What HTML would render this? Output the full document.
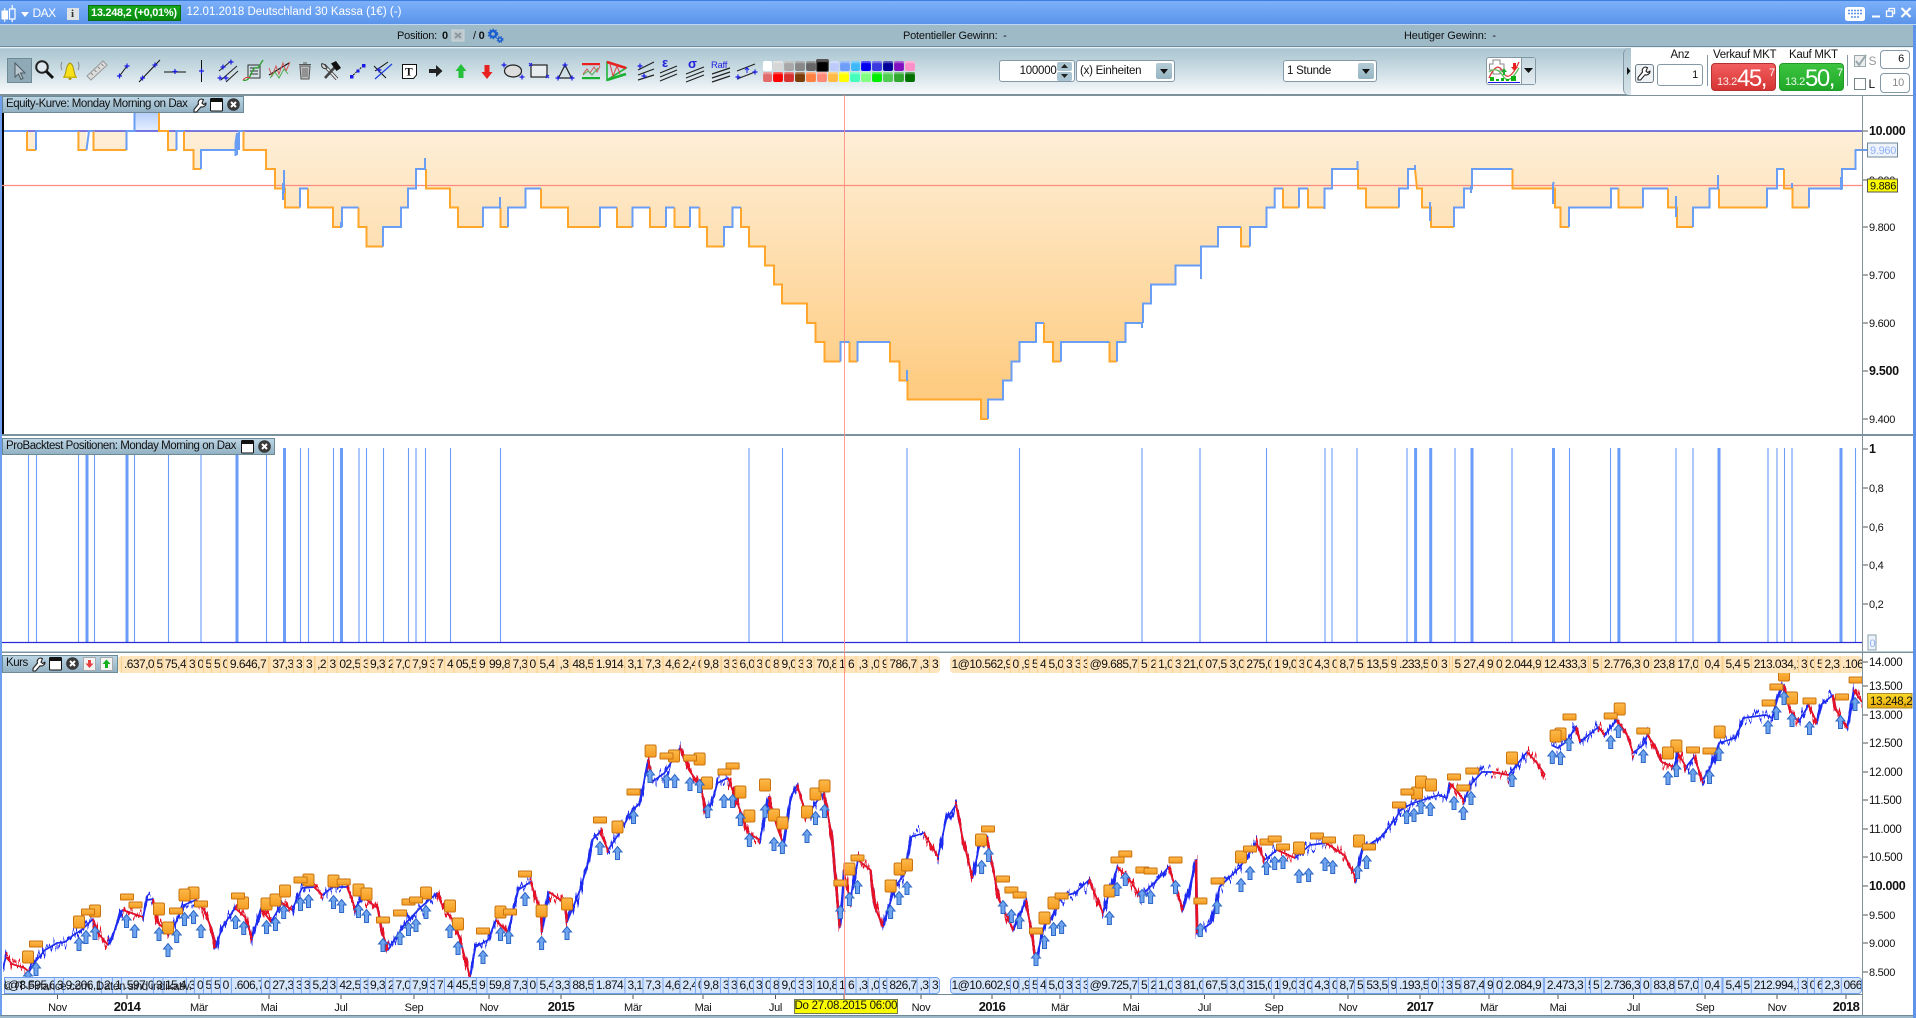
<!DOCTYPE html>
<html lang="de"><head><meta charset="utf-8"><title>DAX</title>
<style>
html,body{margin:0;padding:0;background:#fff}
#p{position:relative;width:1916px;height:1018px;overflow:hidden;background:#fff;font:11px "Liberation Sans",Arial,sans-serif;color:#111;letter-spacing:-.25px}
.a{position:absolute;white-space:nowrap}
svg{position:absolute;left:0;top:0}
svg text{font-family:"Liberation Sans",Arial,sans-serif;font-size:11px;letter-spacing:-.3px;fill:#111}
.inp{background:#fff;border:1px solid #8499a5;border-radius:3px;box-sizing:border-box}
.st{position:absolute;overflow:hidden;border-radius:4px}
.st i{position:absolute;top:0;bottom:0;transform:translateX(-50%);font-style:normal;padding:0 2px;line-height:17px;white-space:nowrap;letter-spacing:-.55px;font-size:12px;color:#111}
.o{background:#fee5bd}.o i{background:#fee5bd;border-left:1px solid #fbd08c;border-right:1px solid #fbd08c}
.b{background:#d5e6fb;border:1px solid #6f9ff0;box-sizing:border-box}.b i{background:#d5e6fb;border-left:1px solid #7ba6ee;border-right:1px solid #7ba6ee}
.hd{position:absolute;background:linear-gradient(#bcd5e5,#92b1c2);border:1px solid #6d8a97;box-sizing:border-box;line-height:15px;padding-left:3px;letter-spacing:-.46px;font-size:11.5px}
.sw{position:absolute;width:9.6px;height:10px;border-radius:2px;box-shadow:inset 0 2px 1px rgba(255,255,255,.35)}
.sel{position:absolute;background:#fff;border:1px solid #8499a5;border-radius:3px;box-sizing:border-box;height:22px;top:60px;line-height:20px;padding-left:3px;font-size:11.5px}
.sel b{position:absolute;right:2px;top:2px;width:16px;height:16px;background:linear-gradient(#b5ccd7,#96b5c3);border-radius:2px}
.sel b:after{content:"";position:absolute;left:4px;top:6px;border:4px solid transparent;border-top:5px solid #111;border-bottom:0}
</style></head><body><div id="p">

<div class="a" style="left:0;top:0;width:1916px;height:25px;background:linear-gradient(#7cb0fa,#5a94ea);border-top:1px solid #3d7ddc;box-sizing:border-box;border-bottom:1px solid #bcd6f8"></div>
<div class="a" style="left:0;top:25px;width:1913px;height:22px;background:#9dbac6;border-bottom:1px solid #6f8f9c;box-sizing:border-box"></div>
<div class="a" style="left:0;top:47px;width:1913px;height:48px;background:linear-gradient(#fff 0,#aac5d1 2px,#d0e0e6 55%,#f8fafb);border-bottom:1px solid #7f929c;box-sizing:border-box"></div>
<div class="a" style="left:1913px;top:25px;width:3px;height:993px;background:#5d93ea"></div>
<div class="a" style="left:0;top:95px;width:2px;height:923px;background:#6e9fee"></div>
<div class="a" style="left:0;top:1015px;width:1913px;height:3px;background:#9db8c8;border-top:1px solid #6f8a96;box-sizing:border-box"></div>

<div class="a" style="left:32.5px;top:6px;color:#fff;font-size:12px;letter-spacing:-.5px">DAX</div>
<div class="a" style="left:66.5px;top:8px;width:12px;height:12px;background:#dfe3e6;color:#333;font:bold 11px/12px 'Liberation Serif',serif;text-align:center;letter-spacing:0">i</div>
<div class="a" style="left:88px;top:5px;width:93px;height:16px;background:linear-gradient(#14a81c,#078a10);border:1px solid #0d6b12;box-sizing:border-box;color:#fff;font-weight:bold;line-height:14px;padding-left:2px;letter-spacing:-.3px">13.248,2 (+0,01%)</div>
<div class="a" style="left:186.5px;top:6px;color:#fff;font-size:11.5px;letter-spacing:.02px">12.01.2018 Deutschland 30 Kassa (1€) (-)</div>

<div class="a" style="left:397px;top:30px">Position:</div>
<div class="a" style="left:442px;top:30px;font-weight:bold">0</div>
<div class="a" style="left:473px;top:30px">/ <b>0</b></div>
<div class="a" style="left:903px;top:30px;letter-spacing:-.2px">Potentieller Gewinn:&nbsp; -</div>
<div class="a" style="left:1404px;top:30px;letter-spacing:-.15px">Heutiger Gewinn:&nbsp; -</div>

<div class="a" style="left:6.5px;top:58px;width:25px;height:25px;background:#8fa9b6;border:1px solid #6d8a97;box-sizing:border-box"></div>

<div class="sw" style="left:762.5px;top:61px;background:#fff"></div><div class="sw" style="left:773.4px;top:61px;background:#d6d6d6"></div><div class="sw" style="left:784.2px;top:61px;background:#a8a8a8"></div><div class="sw" style="left:795px;top:61px;background:#888"></div><div class="sw" style="left:806px;top:61px;background:#666"></div><div class="sw" style="left:815.5px;top:59px;width:13px;height:13px;background:#000;border:1px solid #555;box-sizing:border-box"></div><div class="sw" style="left:829.5px;top:61px;background:#bccbfb"></div><div class="sw" style="left:840px;top:61px;background:#6e9ef7"></div><div class="sw" style="left:850.5px;top:61px;background:#3fb8fa"></div><div class="sw" style="left:861px;top:61px;background:#0000f0"></div><div class="sw" style="left:872px;top:61px;background:#3a3ae0"></div><div class="sw" style="left:883px;top:61px;background:#00009a"></div><div class="sw" style="left:894px;top:61px;background:#8010c0"></div><div class="sw" style="left:905px;top:61px;background:#ff8fc8"></div>
<div class="sw" style="left:762.5px;top:72px;background:#e26c6c"></div><div class="sw" style="left:773.4px;top:72px;background:#f00"></div><div class="sw" style="left:784.2px;top:72px;background:#d93030"></div><div class="sw" style="left:795px;top:72px;background:#7a3c08"></div><div class="sw" style="left:806px;top:72px;background:#ff8040"></div><div class="sw" style="left:817px;top:72px;background:#ff8a78"></div><div class="sw" style="left:828px;top:72px;background:#ffbb44"></div><div class="sw" style="left:839px;top:72px;background:#ff0"></div><div class="sw" style="left:850px;top:72px;background:#44ffbb"></div><div class="sw" style="left:861px;top:72px;background:#80ff80"></div><div class="sw" style="left:872px;top:72px;background:#00ee00"></div><div class="sw" style="left:883px;top:72px;background:#50cc50"></div><div class="sw" style="left:894px;top:72px;background:#30a830"></div><div class="sw" style="left:905px;top:72px;background:#007000"></div>

<div class="inp a" style="left:998.5px;top:60px;width:76px;height:22px;line-height:20px;font-size:11.5px;text-align:right;padding-right:17px">100000</div>
<div class="a" style="left:1057px;top:62px;width:15px;height:9px;background:#a9c4d0;border-radius:2px"></div>
<div class="a" style="left:1057px;top:72px;width:15px;height:9px;background:#a9c4d0;border-radius:2px"></div>
<div class="sel" style="left:1076px;width:99px">(x) Einheiten<b></b></div>
<div class="sel" style="left:1283px;width:94px">1 Stunde<b></b></div>

<div class="a" style="left:1486px;top:57px;width:50px;height:28px;background:#fff;border:1px solid #8499a5;border-radius:3px;box-sizing:border-box"></div>
<div class="a" style="left:1521px;top:58px;width:14px;height:26px;background:linear-gradient(#c2d5de,#e4ecf0);border-left:1px solid #8499a5;box-sizing:border-box"></div>

<div class="a" style="left:1623px;top:48px;width:9px;height:47px;background:linear-gradient(#a8c3cf,#d9e5ea);border-radius:6px 0 0 6px;border-left:1px solid #8499a5;box-sizing:border-box"></div>
<div class="a" style="left:1631px;top:48px;width:282px;height:47px;background:#fff"></div>
<div class="a" style="left:1635px;top:64px;width:19px;height:19px;background:#f0f3f5;border:1px solid #6d7e88;border-radius:3px;box-sizing:border-box"></div>
<div class="a" style="left:1657px;top:49px;width:46px;text-align:center;font-size:11.5px">Anz</div>
<div class="inp a" style="left:1657px;top:64px;width:46px;height:22px;line-height:20px;text-align:right;padding-right:4px">1</div>
<div class="a" style="left:1707px;top:55px;width:1px;height:31px;background:#8499a5"></div>
<div class="a" style="left:1713px;top:49px;font-size:11.5px;letter-spacing:-.3px">Verkauf MKT</div>
<div class="a" style="left:1711px;top:63px;width:65px;height:28px;background:linear-gradient(#f25e5e,#d63434);border:1px solid #b53232;border-radius:4px;box-sizing:border-box;color:#fff">
 <span class="a" style="left:5px;top:12px;font-size:11px;opacity:.9;letter-spacing:-.4px">13.2</span><span class="a" style="left:25px;top:1px;font-size:24px;letter-spacing:-1.5px">45,</span><span class="a" style="left:57px;top:3px;font-size:11px">7</span></div>
<div class="a" style="left:1789px;top:49px;font-size:11.5px;letter-spacing:-.3px">Kauf MKT</div>
<div class="a" style="left:1779px;top:63px;width:65px;height:28px;background:linear-gradient(#3cc440,#20a728);border:1px solid #209a28;border-radius:4px;box-sizing:border-box;color:#fff">
 <span class="a" style="left:5px;top:12px;font-size:11px;opacity:.9;letter-spacing:-.4px">13.2</span><span class="a" style="left:25px;top:1px;font-size:24px;letter-spacing:-1.5px">50,</span><span class="a" style="left:57px;top:3px;font-size:11px">7</span></div>
<div class="a" style="left:1847px;top:55px;width:1px;height:31px;background:#8499a5"></div>
<div class="a" style="left:1853.5px;top:55px;width:12px;height:12px;background:#eee;border:1px solid #9aa8b0;box-sizing:border-box"></div>
<div class="a" style="left:1868.5px;top:54px;color:#999;font-size:12px">S</div>
<div class="inp a" style="left:1880px;top:50px;width:30px;height:19px;line-height:17px;text-align:right;padding-right:5px;border-radius:4px">6</div>
<div class="a" style="left:1853.5px;top:78px;width:12px;height:12px;background:#fff;border:1px solid #77858d;box-sizing:border-box"></div>
<div class="a" style="left:1868.5px;top:77px;font-size:12px">L</div>
<div class="inp a" style="left:1880px;top:73px;width:30px;height:20px;line-height:18px;text-align:right;padding-right:5px;border-radius:4px;color:#8a8a8a">10</div>

<svg width="1916" height="1018" viewBox="0 0 1916 1018">
<defs>
<linearGradient id="fo" gradientUnits="userSpaceOnUse" x1="0" y1="131" x2="0" y2="419"><stop offset="0" stop-color="#feefd8"/><stop offset="1" stop-color="#fec878"/></linearGradient>
<linearGradient id="fb" x1="0" y1="0" x2="0" y2="1"><stop offset="0" stop-color="#b5cefb"/><stop offset="1" stop-color="#e6effe"/></linearGradient>
<linearGradient id="og" x1="0" y1="0" x2="0" y2="1"><stop offset="0" stop-color="#fdb94a"/><stop offset="1" stop-color="#f59c20"/></linearGradient>
<linearGradient id="gt" x1="0" y1="0" x2="0" y2="1"><stop offset="0" stop-color="#fbd92c"/><stop offset="1" stop-color="#e6aa06"/></linearGradient>
<clipPath id="cp"><rect x="3" y="673" width="1859" height="304"/></clipPath>
<filter id="j" filterUnits="userSpaceOnUse" x="0" y="660" width="1870" height="330" color-interpolation-filters="sRGB"><feTurbulence type="fractalNoise" baseFrequency=".4 .015" numOctaves="2" seed="4"/><feColorMatrix values="1 0 0 0 0 0 1 0 0 0 0 0 0 0 .5 0 0 0 0 1" result="n"/><feDisplacementMap in="SourceGraphic" in2="n" scale="26" xChannelSelector="B" yChannelSelector="G"/></filter>
<g id="s"><rect x="-5.5" y="-6" width="11" height="12" rx="1.5" fill="url(#og)" stroke="#c8730f"/></g>
<g id="w"><rect x="-6.5" y="-3" width="13" height="6" rx=".5" fill="url(#og)" stroke="#c8730f"/></g>
<g id="u"><path d="M0-6.5 4.5-1H2V6.5H-2V-1H-4.5Z" fill="#6ea3ee" stroke="#2f68c6"/></g>
<g id="pr">
<path stroke="#1d2cf0" d="M3 967 6 957 12 964 24.5 968 29 972 35 962 45 950 57 943 65 942 73.5 935 81.6 930 93 919 98 933 108 945 114 932 122.5 910 143 917 147 900 153 899 158 923 169 933 175.5 923 184 905 196 900 204 910 212 930 215 948 222.5 927 235 908 245 917 252 938 261 908 271 922 282 903 292 910 302 888 314 887 322.5 895 332.6 887 347 887 355 908 363 897 377.5 908 381.6 930 388 950 404 925 420 908 437 893 443 907 453 920 461 943 470 977 475.5 947 488 940 496 920 508 933 518 890 530.6 882 541 913 542 932 549 892 565 903 567 922 580 890 588 863 592 840 600 832 608 850 618 835 632.6 810 640 803 648 760 652 782 664.5 773 680 748 689 770 701 787 707 817 717.5 783 728 778 740 810 748 833 760 840 768.6 797 777 827 783 843 791 797 797 785 807 817 815.5 803 824 793 832 837 840 927 844 873 850 900 858 860 870.6 870 875 907 883 927 895 887 905 873 911 837 924 833 938 857 946 820 956 805 962.4 837 972.6 878 979 847 987 837 999 900 1013.5 930 1026 900 1036 960 1044 927 1052 917 1060 897 1075 893 1089 880 1103 913 1117.5 867 1132 883 1140 897 1160 877 1168.6 867 1183 910 1189 890 1196 860 1197 933 1211 923 1219.6 887 1240 867 1256 843 1264.5 860 1277 850 1295 858 1310 845 1326 843 1344 855 1356 878 1362 849 1381 837 1396 818 1400.5 810 1413 803 1439 795 1447 798 1449.5 783 1455.6 790 1464 800 1472 783 1482 772 1492 772 1508.6 775 1527 752 1537 763 1545 775M1551.5 745 1557.6 748 1566 742 1576 727 1580 742 1598.5 727 1604.6 735 1617 720 1627 735 1633 753 1643 745 1647.4 735 1655.6 747 1661.7 762 1674 767 1678 753 1686 767 1694 757 1702.5 780 1710.7 767 1719 743 1735 738 1739 730 1743.3 718 1766 715 1772 718 1778 697 1784 685 1789.5 710 1798.5 722 1808.6 705 1817 723 1821 705 1833 695 1835 708 1847.4 728 1853.6 690 1862 702"/>
<path stroke="#f0101c" d="M6 957 12 964 24.5 968 29 972M93 919 98 933 108 945M122.5 910 143 917M153 899 158 923 169 933M196 900 204 910 212 930 215 948M235 908 245 917 252 938M261 908 271 922M282 903 292 910M314 887 322.5 895M347 887 355 908M363 897 377.5 908 381.6 930 388 950M437 893 443 907 453 920 461 943 470 977M496 920 508 933M530.6 882 541 913 542 932M549 892 565 903 567 922M600 832 608 850M648 760 652 782M680 748 689 770 701 787 707 817M728 778 740 810 748 833 760 840M768.6 797 777 827 783 843M797 785 807 817M824 793 832 837 840 927M844 873 850 900M858 860 870.6 870 875 907 883 927M924 833 938 857M956 805 962.4 837 972.6 878M987 837 999 900 1013.5 930M1026 900 1036 960M1089 880 1103 913M1117.5 867 1132 883 1140 897M1168.6 867 1183 910M1196 860 1197 933M1256 843 1264.5 860M1277 850 1295 858M1326 843 1344 855 1356 878M1449.5 783 1455.6 790 1464 800M1492 772 1508.6 775M1527 752 1537 763 1545 775M1576 727 1580 742M1598.5 727 1604.6 735M1617 720 1627 735 1633 753M1647.4 735 1655.6 747 1661.7 762 1674 767M1678 753 1686 767M1694 757 1702.5 780M1784 685 1789.5 710 1798.5 722M1808.6 705 1817 723M1833 695 1835 708 1847.4 728M1853.6 690 1862 702"/>
</g>
</defs>

<!-- Equity pane -->
<rect x="2" y="112" width="2" height="322" fill="#000"/>
<path fill="url(#fo)" d="M4 131H27V150H36V131H78.4V150H86.5V131H93.5V150H126.5V131H168V150H176.5V131H184V150H193.5V169H201V150H239V131H243.5V150H266V169H275V188.5H285V207.5H300V188.5H308V207.5H333V227H342V207.5H358.5V227H366.5V246.5H383V227H401V207.5H408V188.5H416V169H426V188.5H450V207.5H458V227H483V207.5H500.5V227H508V207.5H525.5V188.5H541V207.5H568V227H600V207.5H617V227H632.5V207.5H650V227H666V207.5H674.5V227H690V207.5H699.5V227H707V246.5H724V227H732.5V207.5H741V227H749V246.5H765V265.5H774V284.5H782V303.5H807V323H815.5V342H824.5V361.5H840.5V342H849.5V361.5H857.5V342H890V361.5H899.5V380.5H907.5V399.5H981V419H988V399.5H1003V380.5H1011.5V361.5H1019.5V342H1036V323H1044V342H1053V361.5H1061V342H1109.5V361.5H1117V342H1125.5V323H1143V303.5H1151V284.5H1175.5V265.5H1201V246.5H1218V227H1241V246.5H1250V227H1266.5V207.5H1274.7V188.5H1283V207.5H1299V188.5H1308V207.5H1324.5V188.5H1332V169H1358V188.5H1366V207.5H1399V188.5H1408V169H1416V188.5H1422V207.5H1431V227H1454V207.5H1464V188.5H1472V169H1512.5V188.5H1555V207.5H1560.5V227H1569V207.5H1611V188.5H1618.5V207.5H1643V188.5H1668V207.5H1677V227H1693V207.5H1709.5V188.5H1719V207.5H1767V188.5H1777V169H1784V188.5H1792.5V207.5H1809V188.5H1842V169H1855.5V150H1862V131Z"/>
<rect x="134.5" y="112" width="24.5" height="19" fill="url(#fb)"/>
<path fill="none" stroke="#2a2ad8" stroke-width="1.2" d="M4 131H1862"/>
<path fill="none" stroke="#ff8a80" stroke-width="1.2" d="M2 185.5H1862"/>
<path fill="none" stroke="#ffa62b" stroke-width="2" d="M27 131V150H36M78.4 131V150H86.5M93.5 131V150H126.5M159 112V131H168V150H176.5M184 131V150H193.5V169H201M243.5 131V150H266V169H275V188.5H285V207.5H300M308 188.5V207.5H333V227H342M358.5 207.5V227H366.5V246.5H383M426 169V188.5H450V207.5H458V227H483M500.5 207.5V227H508M541 188.5V207.5H568V227H600M617 207.5V227H632.5M650 207.5V227H666M674.5 207.5V227H690M699.5 207.5V227H707V246.5H724M741 207.5V227H749V246.5H765V265.5H774V284.5H782V303.5H807V323H815.5V342H824.5V361.5H840.5M849.5 342V361.5H857.5M890 342V361.5H899.5V380.5H907.5V399.5H981V419H988M1044 323V342H1053V361.5H1061M1109.5 342V361.5H1117M1241 227V246.5H1250M1283 188.5V207.5H1299M1308 188.5V207.5H1324.5M1358 169V188.5H1366V207.5H1399M1415 169L1417 188.5H1422V207.5H1431V227H1454M1512.5 169V188.5H1555V207.5H1560.5V227H1569M1618.5 188.5V207.5H1643M1668 188.5V207.5H1677V227H1693M1719 188.5V207.5H1767M1784 169V188.5H1792.5V207.5H1809"/>
<path fill="none" stroke="#6a9ef5" stroke-width="2" d="M4 131H27M36 150V131H78.4M86.5 150L89 131H93.5M126.5 150V131H134.5V112H159M176.5 150V131H184M201 169V150H236M235.5 156V143L237 133V155M239 150V131H243.5M283 183V200M284 193V170M300 207.5V188.5H308M342 227V207.5H358.5M341 222V228M383 246.5V227H401V207.5H408V188.5H416V169H425V158M483 227V207.5H500V197M508 227V207.5H525.5V188.5H541M600 227V207.5H617M632.5 227V207.5H650M666 227V207.5H674.5M690 227V207.5H699.5M724 246.5V227H732.5V207.5H741M840.5 361.5V342H849.5M857.5 361.5V342H890M907 370V381M988 419V399.5H1003V380.5H1011.5V361.5H1019.5V342H1036V323H1044M1061 361.5V342H1109.5M1117 361.5V342H1125.5V323H1142V328M1143 323V303.5H1151V284.5H1175.5V265.5H1201V279M1201 265.5V246.5H1218V227H1241M1250 246.5V227H1266.5V207.5H1274.7V188.5H1283M1299 207.5V188.5H1308M1324.5 209V188.5H1332V169H1357.5V161M1399 207.5V188.5H1408V169H1415V165M1430 202V221M1454 227V207.5H1464V188.5H1472V169H1512.5M1471 193V186M1553 204V184L1554 182M1569 227V207.5H1611V188.5H1618.5M1643 207.5V188.5H1668M1676 217V196M1693 227V207.5H1709.5V188.5H1718V175M1767 207.5V188.5H1777V169H1784M1792 188V183M1809 207.5V188.5H1842V169H1855.5V150H1869M1841 190V177"/>
<!-- separators/axis -->
<rect x="0" y="95" width="1913" height="1" fill="#7f929c"/>
<rect x="2" y="434" width="1911" height="2" fill="#7a939f"/>
<rect x="2" y="651.5" width="1911" height="1.5" fill="#7a939f"/>
<rect x="1862" y="95" width="1" height="920" fill="#7f929c"/>
<rect x="2" y="994" width="1861" height="1" fill="#6f8a96"/>

<path stroke="#555" fill="none" d="M1863 131H1868M1863 227H1868M1863 275H1868M1863 323H1868M1863 371H1868M1863 419H1868M1863 180H1868M1863 449H1868M1863 488H1868M1863 527H1868M1863 565H1868M1863 604H1868M1863 662H1868M1863 686H1868M1863 715H1868M1863 743H1868M1863 772H1868M1863 800H1868M1863 829H1868M1863 857H1868M1863 886H1868M1863 915H1868M1863 943H1868M1863 972H1868"/>
<text x="1869" y="135" font-weight="bold" style="font-size:12.5px">10.000</text><text x="1869" y="184">9.900</text><text x="1869" y="231">9.800</text><text x="1869" y="279">9.700</text><text x="1869" y="327">9.600</text><text x="1869" y="375" font-weight="bold" style="font-size:12.5px">9.500</text><text x="1869" y="423">9.400</text>
<rect x="1867.5" y="143" width="30" height="14" fill="#eef3fb" stroke="#6f8a9a"/><text x="1870" y="154" style="fill:#8db0f8">9.960</text>
<rect x="1867.5" y="179" width="30" height="13" fill="#fbfb00" stroke="#555"/><text x="1870" y="189.5">9.886</text>

<!-- Positions -->
<path fill="none" stroke="#6a9df7" stroke-width="1.1" d="M28.5 448V642M36.5 448V642M78.5 448V642M94.5 448V642M134.5 448V642M168.5 448V642M201 448V642M266.5 448V642M300.5 448V642M308.5 448V642M333.5 448V642M359 448V642M366.5 448V642M383.5 448V642M408.5 448V642M416 448V642M425.5 448V642M450.5 448V642M500.5 448V642M749 448V642M782.5 448V642M907 448V642M1019.5 448V642M1142 448V642M1200 448V642M1266.5 448V642M1325 448V642M1332 448V642M1357 448V642M1407 448V642M1455 448V642M1512 448V642M1569.5 448V642M1610.5 448V642M1676 448V642M1693 448V642M1768 448V642M1777 448V642M1784.5 448V642M1792 448V642M1855.5 448V642"/>
<path fill="none" stroke="#6a9df7" stroke-width="3" d="M87 448V642M127 448V642M237 448V642M284.5 448V642M341.5 448V642M1415.6 448V642M1430.7 448V642M1472 448V642M1553.5 448V642M1618.9 448V642M1719 448V642M1841 448V642"/>
<path fill="none" stroke="#2a2ad8" stroke-width="1.2" d="M2 642.5H1862"/>
<text x="1869" y="453" font-weight="bold" style="font-size:12.5px">1</text><text x="1869" y="492">0,8</text><text x="1869" y="531">0,6</text><text x="1869" y="569">0,4</text><text x="1869" y="608">0,2</text>
<rect x="1868" y="635" width="8" height="15" fill="#eef3fb" stroke="#8aa0ae"/><text x="1869.5" y="647" style="fill:#8db0f8">0</text>

<!-- Price -->
<g clip-path="url(#cp)">
<use href="#pr" fill="none" stroke-width="2.6" filter="url(#j)"/>
<use href="#pr" fill="none" stroke-width="1.7" stroke-linejoin="round"/>
<use href="#s" x="28" y="957"/><use href="#s" x="79" y="922"/><use href="#s" x="95" y="911"/><use href="#s" x="159" y="909"/><use href="#s" x="168" y="928"/><use href="#s" x="193.5" y="893"/><use href="#s" x="184.5" y="895"/><use href="#s" x="243" y="903"/><use href="#s" x="266.5" y="904"/><use href="#s" x="275.5" y="900"/><use href="#s" x="285" y="891"/><use href="#s" x="308.5" y="880"/><use href="#s" x="333.5" y="881"/><use href="#s" x="358.5" y="890"/><use href="#s" x="366.5" y="894"/><use href="#s" x="426" y="893"/><use href="#s" x="450" y="906"/><use href="#s" x="458" y="924"/><use href="#s" x="500.5" y="912"/><use href="#s" x="541.6" y="911"/><use href="#s" x="567" y="904"/><use href="#s" x="617.5" y="827"/>
<use href="#s" x="650.6" y="751"/><use href="#s" x="674" y="756"/><use href="#s" x="699.6" y="759"/><use href="#s" x="707" y="783"/><use href="#s" x="740.4" y="792"/><use href="#s" x="749.4" y="816"/><use href="#s" x="765" y="785"/><use href="#s" x="774" y="815"/><use href="#s" x="782.4" y="823"/><use href="#s" x="807" y="812"/><use href="#s" x="815.5" y="794"/><use href="#s" x="824.5" y="786"/><use href="#s" x="849.4" y="869"/><use href="#s" x="890.6" y="886"/><use href="#s" x="899.6" y="869"/><use href="#s" x="907" y="865"/><use href="#s" x="981" y="840"/><use href="#s" x="1053.5" y="903"/><use href="#s" x="1044.5" y="918"/><use href="#s" x="1109.4" y="891"/><use href="#s" x="1241" y="857"/>
<use href="#s" x="1417" y="793"/><use href="#s" x="1421" y="782"/><use href="#s" x="1431" y="785"/><use href="#s" x="1512" y="758"/><use href="#s" x="1560.5" y="734"/><use href="#s" x="1555.6" y="736"/><use href="#s" x="1619.7" y="709"/><use href="#s" x="1676.4" y="746"/><use href="#s" x="1668" y="753"/><use href="#s" x="1719.7" y="732"/><use href="#s" x="1784" y="675"/><use href="#s" x="1792" y="698"/><use href="#s" x="1299" y="848"/><use href="#s" x="1359" y="841"/>
<use href="#w" x="36" y="944"/><use href="#w" x="88" y="912"/><use href="#w" x="127" y="897"/><use href="#w" x="135.5" y="905"/><use href="#w" x="176" y="911"/><use href="#w" x="201" y="904"/><use href="#w" x="238" y="896"/><use href="#w" x="300.5" y="880"/><use href="#w" x="343.7" y="882"/><use href="#w" x="383" y="920"/><use href="#w" x="400" y="913"/><use href="#w" x="408.5" y="902"/><use href="#w" x="416" y="900"/><use href="#w" x="483" y="931"/><use href="#w" x="510" y="912"/><use href="#w" x="525" y="874"/><use href="#w" x="600" y="820"/><use href="#w" x="633.5" y="792"/>
<use href="#w" x="666.5" y="756"/><use href="#w" x="690" y="758"/><use href="#w" x="724.5" y="772"/><use href="#w" x="732.6" y="766"/><use href="#w" x="840.4" y="883"/><use href="#w" x="857.5" y="858"/><use href="#w" x="988" y="829"/><use href="#w" x="1003" y="879"/><use href="#w" x="1011.4" y="890"/><use href="#w" x="1019.6" y="895"/><use href="#w" x="1036" y="931"/><use href="#w" x="1061.6" y="896"/><use href="#w" x="1117.5" y="860"/><use href="#w" x="1125.3" y="854"/><use href="#w" x="1142.4" y="870"/><use href="#w" x="1150.6" y="871"/><use href="#w" x="1175.5" y="860"/><use href="#w" x="1200.4" y="901"/><use href="#w" x="1217.6" y="881"/><use href="#w" x="1250" y="849"/><use href="#w" x="1266.5" y="842"/><use href="#w" x="1274.7" y="839"/>
<use href="#w" x="1283" y="847"/><use href="#w" x="1317" y="836"/><use href="#w" x="1329" y="840"/><use href="#w" x="1369" y="847"/><use href="#w" x="1399" y="805"/><use href="#w" x="1407.4" y="792"/><use href="#w" x="1454" y="777"/><use href="#w" x="1463.3" y="788"/><use href="#w" x="1472.3" y="771"/><use href="#w" x="1569.5" y="717"/><use href="#w" x="1610.7" y="716"/><use href="#w" x="1643.3" y="731"/><use href="#w" x="1693" y="750"/><use href="#w" x="1709.5" y="751"/><use href="#w" x="1768.6" y="703"/><use href="#w" x="1776.4" y="687"/><use href="#w" x="1809.5" y="701"/><use href="#w" x="1842" y="697"/><use href="#w" x="1855.6" y="680"/>
<use href="#u" x="28" y="977"/><use href="#u" x="36" y="969"/><use href="#u" x="79" y="944"/><use href="#u" x="86" y="937"/><use href="#u" x="95" y="933"/><use href="#u" x="126.5" y="921"/><use href="#u" x="134.7" y="931"/><use href="#u" x="159" y="934"/><use href="#u" x="168" y="950"/><use href="#u" x="176.7" y="936"/><use href="#u" x="184.5" y="919"/><use href="#u" x="193.5" y="917"/><use href="#u" x="201" y="931"/><use href="#u" x="235.5" y="922"/><use href="#u" x="243.7" y="928"/><use href="#u" x="266.5" y="927"/><use href="#u" x="275.5" y="924"/><use href="#u" x="283.7" y="912"/><use href="#u" x="300.5" y="904"/><use href="#u" x="308.5" y="901"/><use href="#u" x="333.5" y="902"/><use href="#u" x="341.6" y="906"/><use href="#u" x="358.5" y="911"/><use href="#u" x="366.5" y="916"/><use href="#u" x="383" y="945"/><use href="#u" x="400" y="938"/><use href="#u" x="408.5" y="929"/><use href="#u" x="416" y="925"/><use href="#u" x="426" y="912"/><use href="#u" x="450" y="931"/><use href="#u" x="458" y="948"/><use href="#u" x="483" y="957"/><use href="#u" x="500.5" y="934"/><use href="#u" x="508.6" y="937"/><use href="#u" x="525" y="899"/><use href="#u" x="541.6" y="943"/><use href="#u" x="567" y="933"/><use href="#u" x="600" y="848"/><use href="#u" x="617.5" y="853"/><use href="#u" x="633.5" y="817"/>
<use href="#u" x="650" y="776"/><use href="#u" x="666.5" y="781"/><use href="#u" x="674.7" y="781"/><use href="#u" x="690" y="784"/><use href="#u" x="699.6" y="786"/><use href="#u" x="707.7" y="811"/><use href="#u" x="724" y="801"/><use href="#u" x="732.6" y="801"/><use href="#u" x="740.4" y="819"/><use href="#u" x="749.4" y="840"/><use href="#u" x="765" y="811"/><use href="#u" x="774" y="844"/><use href="#u" x="782.4" y="847"/><use href="#u" x="807" y="836"/><use href="#u" x="815.5" y="818"/><use href="#u" x="824.5" y="811"/><use href="#u" x="840.4" y="912"/><use href="#u" x="849.4" y="899"/><use href="#u" x="857.5" y="887"/><use href="#u" x="890.6" y="912"/><use href="#u" x="899" y="898"/><use href="#u" x="907" y="888"/><use href="#u" x="981.6" y="867"/><use href="#u" x="988.6" y="855"/><use href="#u" x="1003" y="907"/><use href="#u" x="1011.4" y="916"/><use href="#u" x="1019.6" y="922"/><use href="#u" x="1036" y="959"/><use href="#u" x="1044.5" y="942"/><use href="#u" x="1053.5" y="929"/><use href="#u" x="1061.6" y="927"/><use href="#u" x="1109.4" y="918"/><use href="#u" x="1117" y="889"/><use href="#u" x="1125.3" y="879"/><use href="#u" x="1142" y="896"/><use href="#u" x="1150.6" y="897"/><use href="#u" x="1175.5" y="887"/><use href="#u" x="1200.4" y="930"/><use href="#u" x="1217" y="907"/><use href="#u" x="1241" y="885"/><use href="#u" x="1250" y="873"/><use href="#u" x="1266.5" y="868"/><use href="#u" x="1274.7" y="863"/>
<use href="#u" x="1283" y="862"/><use href="#u" x="1299" y="876"/><use href="#u" x="1308.6" y="875"/><use href="#u" x="1325" y="864"/><use href="#u" x="1332.7" y="867"/><use href="#u" x="1357.6" y="872"/><use href="#u" x="1366.6" y="862"/><use href="#u" x="1406.6" y="817"/><use href="#u" x="1414" y="815"/><use href="#u" x="1421" y="807"/><use href="#u" x="1430.3" y="809"/><use href="#u" x="1454" y="803"/><use href="#u" x="1463.3" y="813"/><use href="#u" x="1471" y="798"/><use href="#u" x="1512" y="780"/><use href="#u" x="1552.3" y="757"/><use href="#u" x="1560.5" y="758"/><use href="#u" x="1569" y="744"/><use href="#u" x="1610.7" y="742"/><use href="#u" x="1618.4" y="731"/><use href="#u" x="1643.3" y="756"/><use href="#u" x="1668" y="778"/><use href="#u" x="1676.4" y="770"/><use href="#u" x="1693" y="775"/><use href="#u" x="1709.5" y="777"/><use href="#u" x="1719" y="754"/><use href="#u" x="1768" y="727"/><use href="#u" x="1776.4" y="713"/><use href="#u" x="1784" y="698"/><use href="#u" x="1792" y="720"/><use href="#u" x="1809.5" y="728"/><use href="#u" x="1840.5" y="722"/><use href="#u" x="1855" y="704"/>
</g>
<text x="1869" y="666" style="font-size:11.5px">14.000</text><text x="1869" y="690" style="font-size:11.5px">13.500</text><text x="1869" y="719" style="font-size:11.5px">13.000</text><text x="1869" y="747" style="font-size:11.5px">12.500</text><text x="1869" y="776" style="font-size:11.5px">12.000</text><text x="1869" y="804" style="font-size:11.5px">11.500</text><text x="1869" y="833" style="font-size:11.5px">11.000</text><text x="1869" y="861" style="font-size:11.5px">10.500</text><text x="1869" y="890" font-weight="bold" style="font-size:12.5px">10.000</text><text x="1869" y="919">9.500</text><text x="1869" y="947">9.000</text><text x="1869" y="976">8.500</text>
<rect x="1867.5" y="693.5" width="44.5" height="14.5" fill="url(#gt)" stroke="#a98a2c"/><text x="1870" y="705" style="font-size:11.5px">13.248,2</text>

<path stroke="#555" fill="none" d="M57.5 995V999M127 995V999M199 995V999M269 995V999M341 995V999M414 995V999M489 995V999M561 995V999M633 995V999M703 995V999M775.5 995V999M844 995V999M921 995V999M992 995V999M1060 995V999M1131 995V999M1204.5 995V999M1274 995V999M1348 995V999M1420 995V999M1489 995V999M1558 995V999M1633.5 995V999M1705 995V999M1777 995V999M1846 995V999"/>
<g text-anchor="middle"><text x="57.5" y="1011">Nov</text><text x="127" y="1011" font-weight="bold" style="font-size:13px;letter-spacing:-.6px">2014</text><text x="199" y="1011">Mär</text><text x="269" y="1011">Mai</text><text x="341" y="1011">Jul</text><text x="414" y="1011">Sep</text><text x="489" y="1011">Nov</text><text x="561" y="1011" font-weight="bold" style="font-size:13px;letter-spacing:-.6px">2015</text><text x="633" y="1011">Mär</text><text x="703" y="1011">Mai</text><text x="775.5" y="1011">Jul</text><text x="921" y="1011">Nov</text><text x="992" y="1011" font-weight="bold" style="font-size:13px;letter-spacing:-.6px">2016</text><text x="1060" y="1011">Mär</text><text x="1131" y="1011">Mai</text><text x="1204.5" y="1011">Jul</text><text x="1274" y="1011">Sep</text><text x="1348" y="1011">Nov</text><text x="1420" y="1011" font-weight="bold" style="font-size:13px;letter-spacing:-.6px">2017</text><text x="1489" y="1011">Mär</text><text x="1558" y="1011">Mai</text><text x="1633.5" y="1011">Jul</text><text x="1705" y="1011">Sep</text><text x="1777" y="1011">Nov</text><text x="1846" y="1011" font-weight="bold" style="font-size:13px;letter-spacing:-.6px">2018</text></g>
</svg>

<!-- Top label strip -->
<div class="st o" style="left:118px;top:656px;width:822px;height:17px;margin-left:0"><div style="position:absolute;left:-118px;top:0;width:1000px;height:17px"><i style="left:139px">.637,0</i><i style="left:159.6px">5</i><i style="left:175.5px">75,4</i><i style="left:192px">3</i><i style="left:200.5px">0</i><i style="left:208.6px">5</i><i style="left:217px">5</i><i style="left:225.7px">0</i><i style="left:248px">9.646,7</i><i style="left:283px">37,3</i><i style="left:299px">3</i><i style="left:309px">3</i><i style="left:321.6px">,2</i><i style="left:332.6px">3</i><i style="left:350px">02,5</i><i style="left:366px">3</i><i style="left:377.5px">9,3</i><i style="left:391px">2</i><i style="left:403px">7,0</i><i style="left:419.6px">7,9</i><i style="left:432.6px">3</i><i style="left:440px">7</i><i style="left:450px">4</i><i style="left:466.5px">05,5</i><i style="left:482px">9</i><i style="left:499.6px">99,8</i><i style="left:520px">7,3</i><i style="left:532.6px">0</i><i style="left:547px">5,4</i><i style="left:564px">,3</i><i style="left:583px">48,5</i><i style="left:614px">1.914,0</i><i style="left:635px">3,1</i><i style="left:653px">7,3</i><i style="left:672.6px">4,6</i><i style="left:690px">2,4</i><i style="left:701px">0</i><i style="left:711px">9,8</i><i style="left:726.5px">3</i><i style="left:734.7px">3</i><i style="left:747px">6,0</i><i style="left:759.6px">3</i><i style="left:768px">0</i><i style="left:776px">8</i><i style="left:789px">9,0</i><i style="left:801px">3</i><i style="left:809px">3</i><i style="left:827px">70,8</i><i style="left:842px">1</i><i style="left:851px">6</i><i style="left:863px">,3</i><i style="left:875px">,0</i><i style="left:885px">9</i><i style="left:903px">786,7</i><i style="left:924px">,3</i><i style="left:935px">3</i></div></div>
<div class="st o" style="left:950px;top:656px;width:912px;height:17px"><div style="position:absolute;left:-950px;top:0;width:1900px;height:17px"><i style="left:981.6px">1@10.562,9</i><i style="left:1015.5px">0</i><i style="left:1025.7px">,9</i><i style="left:1035px">5</i><i style="left:1043px">4</i><i style="left:1056px">5,0</i><i style="left:1069px">3</i><i style="left:1078px">3</i><i style="left:1086px">3</i><i style="left:1113.5px">@9.685,7</i><i style="left:1144px">5</i><i style="left:1153.5px">2</i><i style="left:1165.7px">1,0</i><i style="left:1178px">3</i><i style="left:1194px">21,0</i><i style="left:1216px">07,5</i><i style="left:1237px">3,0</i><i style="left:1260px">275,0</i><i style="left:1277px">1</i><i style="left:1289.5px">9,0</i><i style="left:1301.7px">3</i><i style="left:1309.5px">0</i><i style="left:1322px">4,3</i><i style="left:1335px">0</i><i style="left:1347px">8,7</i><i style="left:1360px">5</i><i style="left:1377px">13,5</i><i style="left:1393.5px">9</i><i style="left:1414px">.233,5</i><i style="left:1434px">0</i><i style="left:1444px">3</i><i style="left:1457.6px">5</i><i style="left:1474px">27,4</i><i style="left:1490px">9</i><i style="left:1499px">0</i><i style="left:1523px">2.044,9</i><i style="left:1565px">12.433,3</i><i style="left:1595.6px">5</i><i style="left:1622px">2.776,3</i><i style="left:1646px">0</i><i style="left:1664px">23,8</i><i style="left:1688px">17,0</i><i style="left:1704px">0</i><i style="left:1712px">0,4</i><i style="left:1733px">5,4</i><i style="left:1746.6px">5</i><i style="left:1778px">213.034,1</i><i style="left:1804px">3</i><i style="left:1812.7px">0</i><i style="left:1820px">5</i><i style="left:1832px">2,3</i><i style="left:1852.7px">.106</i></div></div>

<!-- Bottom label strip -->
<div class="st b" style="left:4px;top:977px;width:936px;height:17px;border-radius:0 4px 4px 0"><div style="position:absolute;left:-5px;top:-1px;width:1000px;height:17px"><i style="left:28.6px">1@8.595,6</i><i style="left:60px">3</i><i style="left:83.7px">9.206,1</i><i style="left:107px">2</i><i style="left:118px">1</i><i style="left:139px">.597,0</i><i style="left:159px">3</i><i style="left:175.5px">15,4</i><i style="left:192px">3</i><i style="left:200px">0</i><i style="left:208.6px">5</i><i style="left:217px">5</i><i style="left:225.7px">0</i><i style="left:249px">.606,7</i><i style="left:267px">0</i><i style="left:283px">27,3</i><i style="left:299px">3</i><i style="left:307px">3</i><i style="left:320px">5,2</i><i style="left:332.6px">3</i><i style="left:350px">42,5</i><i style="left:366px">3</i><i style="left:377.5px">9,3</i><i style="left:391px">2</i><i style="left:403px">7,0</i><i style="left:419.6px">7,9</i><i style="left:432.6px">3</i><i style="left:440px">7</i><i style="left:450px">4</i><i style="left:466.5px">45,5</i><i style="left:482px">9</i><i style="left:499.6px">59,8</i><i style="left:520px">7,3</i><i style="left:532.6px">0</i><i style="left:547px">5,4</i><i style="left:562.5px">3,3</i><i style="left:583px">88,5</i><i style="left:614px">1.874,0</i><i style="left:635px">3,1</i><i style="left:653px">7,3</i><i style="left:672.6px">4,6</i><i style="left:690px">2,4</i><i style="left:701px">0</i><i style="left:711px">9,8</i><i style="left:726px">3</i><i style="left:734px">3</i><i style="left:747px">6,0</i><i style="left:759px">3</i><i style="left:768px">0</i><i style="left:776px">8</i><i style="left:789px">9,0</i><i style="left:801px">3</i><i style="left:809px">3</i><i style="left:827px">10,8</i><i style="left:842px">1</i><i style="left:851px">6</i><i style="left:863px">,3</i><i style="left:875px">,0</i><i style="left:885px">9</i><i style="left:903px">826,7</i><i style="left:924px">,3</i><i style="left:935px">3</i></div></div>
<div class="st b" style="left:950px;top:977px;width:912px;height:17px"><div style="position:absolute;left:-951px;top:-1px;width:1900px;height:17px"><i style="left:981.6px">1@10.602,9</i><i style="left:1015.5px">0</i><i style="left:1025.7px">,9</i><i style="left:1035px">5</i><i style="left:1043px">4</i><i style="left:1056px">5,0</i><i style="left:1069px">3</i><i style="left:1078px">3</i><i style="left:1086px">3</i><i style="left:1113.5px">@9.725,7</i><i style="left:1144px">5</i><i style="left:1153.5px">2</i><i style="left:1165.7px">1,0</i><i style="left:1178px">3</i><i style="left:1194px">81,0</i><i style="left:1216px">67,5</i><i style="left:1237px">3,0</i><i style="left:1260px">315,0</i><i style="left:1277px">1</i><i style="left:1289.5px">9,0</i><i style="left:1301.7px">3</i><i style="left:1309.5px">0</i><i style="left:1322px">4,3</i><i style="left:1335px">0</i><i style="left:1347px">8,7</i><i style="left:1360px">5</i><i style="left:1377px">53,5</i><i style="left:1393.5px">9</i><i style="left:1414px">.193,5</i><i style="left:1434px">0</i><i style="left:1444px">3</i><i style="left:1449px">3</i><i style="left:1457.6px">5</i><i style="left:1474px">87,4</i><i style="left:1490px">9</i><i style="left:1499px">0</i><i style="left:1523px">2.084,9</i><i style="left:1565px">2.473,3</i><i style="left:1591px">5</i><i style="left:1596px">5</i><i style="left:1622px">2.736,3</i><i style="left:1646px">0</i><i style="left:1664px">83,8</i><i style="left:1688px">57,0</i><i style="left:1704px">0</i><i style="left:1712px">0,4</i><i style="left:1733px">5,4</i><i style="left:1746.6px">5</i><i style="left:1778px">212.994,1</i><i style="left:1804px">3</i><i style="left:1812.7px">0</i><i style="left:1820px">6</i><i style="left:1832px">2,3</i><i style="left:1852.7px">066</i></div></div>
<div class="a" style="left:4px;top:981px;font-size:11.5px;letter-spacing:-.3px;color:#222">© IT-Finance.com: Daten sind indikativ.</div>

<div class="a" style="left:793.5px;top:999px;width:104px;height:15px;background:#fbfb00;border:1px solid #6b7a50;box-sizing:border-box;line-height:13px;text-align:center;font-size:11.5px;letter-spacing:-.25px">Do 27.08.2015 06:00</div>

<!-- Pane headers -->
<div class="hd" style="left:2px;top:96px;width:242px;height:17px">Equity-Kurve: Monday Morning on Dax</div>
<div class="hd" style="left:2px;top:438px;width:273px;height:17px">ProBacktest Positionen: Monday Morning on Dax</div>
<div class="hd" style="left:2px;top:655px;width:116px;height:18px">Kurs</div>

<svg width="1916" height="1018" viewBox="0 0 1916 1018">
<defs>
<g id="wr"><path d="M8.5 1A3.6 3.6 0 0 0 5.5 6L1 11.5V14H3.5L8 8.8A3.8 3.8 0 0 0 13 5L10.8 6.6 9 5.2 10.5 1.6Z" fill="#fff" stroke="#222" stroke-width="1.1" stroke-linejoin="round"/></g>
<g id="wn"><rect x=".5" y=".5" width="12" height="12.5" rx="1" fill="#fff" stroke="#111"/><rect x=".5" y=".5" width="12" height="3.5" fill="#111"/></g>
<g id="cl"><circle cx="6.5" cy="6.5" r="6.3" fill="#3a3a3a"/><path d="M4 4 9 9M9 4 4 9" stroke="#fff" stroke-width="2"/></g>
<g id="pl"><path d="M-2.5 0H2.5M0-2.5V2.5" stroke="#1a1ae6" stroke-width="1.2" fill="none"/></g>
</defs>
<!-- crosshair -->
<path d="M844.5 95V999" stroke="#ff8a80" stroke-width="1" opacity=".85"/>

<!-- title icons -->
<path d="M2 11H7.5V19H2ZM4.7 8V22" fill="#fff" stroke="#fff"/>
<path d="M9.5 9H15V19H9.5ZM12.2 5V9M12.2 19V22" fill="none" stroke="#fff" stroke-width="1.2"/>
<path d="M21 12H29L25 17Z" fill="#fff"/>
<rect x="1845" y="7" width="20" height="14" rx="2.5" fill="#fff"/>
<path d="M1848 10.5H1862M1848 13.5H1862M1851 17H1859" stroke="#5a90e6" stroke-width="1.5" stroke-dasharray="2 1" fill="none"/>
<path d="M1872 16.5H1880" stroke="#fff" stroke-width="2"/>
<path d="M1886.5 11H1892.5V16.5H1886.5ZM1889 11V8.5H1894.5V13.5H1892.5" fill="none" stroke="#fff" stroke-width="1.3"/>
<path d="M1901.5 8 1910.5 17M1910.5 8 1901.5 17" stroke="#fff" stroke-width="2.2"/>

<!-- row 2 icons -->
<rect x="452" y="30" width="12" height="11" fill="#bcc8cd" stroke="#cdd7db"/><path d="M455 33 461 38M461 33 455 38" stroke="#8c9aa0" stroke-width="2"/>
<circle cx="493" cy="34" r="3" fill="none" stroke="#1c5fd0" stroke-width="2.5"/><circle cx="493" cy="34" r="4.6" fill="none" stroke="#1c5fd0" stroke-width="1.4" stroke-dasharray="1.5 1.5"/>
<circle cx="500" cy="39.5" r="1.8" fill="none" stroke="#1c5fd0" stroke-width="1.6"/><circle cx="500" cy="39.5" r="3" fill="none" stroke="#1c5fd0" stroke-width="1" stroke-dasharray="1.2 1.2"/>

<!-- toolbar icons -->
<path d="M15 63V77L18.5 74 21 79.5 23 78.5 20.5 73H25Z" fill="#b9c8d0" stroke="#4d5a62"/>
<circle cx="42" cy="67" r="5.8" fill="#dfe9ef" stroke="#222" stroke-width="2"/><path d="M46.5 71.5 53 78" stroke="#111" stroke-width="3"/>
<path d="M64 77C66.5 74 65.5 65 70 63 74.5 65 73.5 74 76 77Z" fill="#f7e21a" stroke="#a8920e"/><circle cx="70" cy="78.5" r="1.5" fill="#a8920e"/><path d="M62 62Q60 66 62 70M78 62Q80 66 78 70" stroke="#888" fill="none"/><rect x="63" y="76.5" width="14" height="1.5" fill="#d0b412"/>
<path d="M87 76 103 61 107 65 91 80Z" fill="#ddd" stroke="#999"/><path d="M91 73 93 75M94.5 70 96.5 72M98 67 100 69M101.5 64 103.5 66" stroke="#888"/>
<path d="M119.5 76 127 66" stroke="#111"/><use href="#pl" x="119.5" y="76"/><use href="#pl" x="127" y="66"/>
<path d="M139 82 160 60" stroke="#111"/><use href="#pl" x="142.5" y="78"/><use href="#pl" x="155" y="65"/>
<path d="M164 72H186" stroke="#111"/><use href="#pl" x="175" y="71.5"/>
<path d="M201.5 60V82" stroke="#111"/><use href="#pl" x="201.5" y="71"/>
<path d="M219 71 231 61M221 80 237 66M226 82 238 71" stroke="#222" fill="none"/><use href="#pl" x="223" y="67"/><use href="#pl" x="231" y="62"/><use href="#pl" x="220" y="78"/><use href="#pl" x="226" y="78"/>
<path d="M248 65H260V78H248ZM250 68H258M250 71H258M250 74H258" stroke="#333" fill="none"/><path d="M243 80Q248 82 251 74T258 68L263 60" stroke="#2ca02c" stroke-width="1.3" fill="none"/><path d="M243 80Q246 76 250 78" stroke="#e03a3a" fill="none"/>
<path d="M269 75 289 63" stroke="#111" stroke-width="1.2"/><path d="M269 68 272 76 276 66 279 74 283 63 286 71 290 62" stroke="#d65656" fill="none"/><path d="M270 78 275 72 279 78 284 69 288 74" stroke="#4caf50" fill="none"/>
<path d="M300 66H310L309 79H301ZM299 64.5H311M303 63H307" stroke="#555" fill="#bdbdbd"/><path d="M303 68V77M305 68V77M307 68V77" stroke="#666"/>
<path d="M324 65 337 79" stroke="#333" stroke-width="3.4"/><path d="M324 65 337 79" stroke="#e6e6e6" stroke-width="1.8"/><path d="M322 63.5A3.5 3.5 0 0 0 327 68L324.5 64.5Z" fill="#ddd" stroke="#333"/>
<path d="M325 78 335 67" stroke="#444" stroke-width="2.6"/><path d="M331 63.5 336 61 341 68 336.5 71Z" fill="#111"/>
<path d="M351 77 364 65" stroke="#111" stroke-dasharray="2 1"/><rect x="350" y="75" width="3.5" height="3.5" fill="#1a1ae6"/><rect x="362" y="64" width="3.5" height="3.5" fill="#1a1ae6"/><rect x="356.5" y="69.5" width="3" height="3" fill="#1a1ae6"/>
<path d="M374 66 386 78" stroke="#111"/><path d="M375 79 392 64" stroke="#1a3ae6" stroke-width="1.2"/><path d="M375 71 388 62" stroke="#111"/><use href="#pl" x="379" y="70"/>
<path d="M402.5 64.5H416.5V75L413.5 78.5H402.5Z" fill="#fff" stroke="#111"/><text x="405" y="75.5" style="font:bold 11.5px 'Liberation Serif',serif;letter-spacing:0">T</text>
<path d="M429 69H436V65L442.5 71 436 77V73H429Z" fill="#222"/>
<path d="M461 64 466.5 71H463.5V78H458.5V71H455.5Z" fill="#25c03a"/>
<path d="M487 79 481.5 72H484.5V65H489.5V72H492.5Z" fill="#e82020"/>
<ellipse cx="513" cy="71" rx="8.5" ry="6" fill="#ddd" stroke="#222" stroke-width="1.2"/><use href="#pl" x="504" y="65"/><use href="#pl" x="522" y="77"/>
<rect x="531" y="65" width="16" height="12" fill="#e8eef0" stroke="#222" stroke-width="1.2"/><path d="M529 63 532 66M532 63 529 66M546 75 549 78M549 75 546 78" stroke="#1a1ae6"/>
<path d="M565 65 558.5 78H571.5Z" fill="none" stroke="#222" stroke-width="1.2"/><use href="#pl" x="565" y="65"/><use href="#pl" x="558" y="78"/><use href="#pl" x="572" y="78"/>
<rect x="582" y="63" width="18" height="2.2" fill="#e82020"/><rect x="582" y="77" width="18" height="2.2" fill="#18b030"/><path d="M583 74 587 69 590 73 594 67 597 72 600 66" stroke="#d65656" fill="none"/><path d="M583 75 588 71 592 75 598 68" stroke="#4caf50" fill="none"/>
<path d="M607 62 626 68 607 80Z" fill="none" stroke="#18b030" stroke-width="1.5"/><path d="M607 62 626 68" stroke="#e82020" stroke-width="2.5"/><path d="M607 80 626 74" stroke="#18b030" stroke-width="2.5"/><path d="M610 64 613 76 617 66 620 74" stroke="#e04040" fill="none"/>
<path d="M638 70 654 62M638 75 654 69M638 80 654 75" stroke="#222" stroke-width="1.2"/><use href="#pl" x="640" y="66"/><use href="#pl" x="644" y="76"/>
<text x="662" y="67" style="font:bold 13px 'Liberation Sans',sans-serif;fill:#2222dd">ε</text><path d="M660 73 677 66M660 77 677 70M660 81 677 74" stroke="#222" stroke-width="1.2"/>
<text x="688" y="68" style="font:bold 13px 'Liberation Sans',sans-serif;fill:#2222dd">σ</text><path d="M686 74 704 67M686 78 704 71M686 82 704 75" stroke="#222" stroke-width="1.2"/>
<text x="711" y="68" style="font-size:9.5px;fill:#2222dd">Raff</text><path d="M712 74 730 68M712 78 730 72M712 82 730 76" stroke="#222" stroke-width="1.2"/>
<path d="M737 71 755 64M737 79 755 72" stroke="#222" stroke-width="1.2"/><path d="M747 73V68M745 70 747 67.5 749 70" stroke="#1a1ae6" fill="none"/><use href="#pl" x="738" y="77"/><use href="#pl" x="755" y="72"/>
<path d="M1061 68 1068 68 1064.5 64ZM1061 74 1068 74 1064.5 78Z" fill="#222"/>

<!-- chart button icon -->
<path d="M1490 60H1497V64H1501V70H1497V74H1490V70H1486.5V64H1490Z" transform="translate(3 0)" fill="#fff" stroke="#888"/>
<path d="M1489 78Q1497 60 1503 72T1519 62" stroke="#d83c3c" fill="none" stroke-width="1.3"/><path d="M1489 72Q1497 66 1503 76T1519 68" stroke="#58c058" fill="none" stroke-width="1.3"/>
<path d="M1501 72 1504 68 1507 72ZM1503 72H1505V75H1503Z" fill="#18b030"/><path d="M1513 63H1516V67H1518L1514.5 71 1511 67H1513Z" fill="#e82020"/>
<path d="M1490 81V77H1494V81ZM1496 81V79H1499V81ZM1501 81V78H1504V81ZM1506 81V79H1509V81ZM1511 81V76H1516V81Z" fill="#10b010"/><path d="M1488 82.5H1520" stroke="#1a1ae6"/>
<path d="M1524 68H1533L1528.5 73Z" fill="#111"/>
<!-- right panel icons -->
<path d="M1627 67V75L1630.5 71Z" fill="#111"/>
<use href="#wr" x="1637" y="66"/>
<path d="M1856 61 1859 65 1866 55" stroke="#9aa8b0" stroke-width="2" fill="none"/>

<!-- pane header icons -->
<use href="#wr" x="193" y="98"/><use href="#wn" x="210" y="98"/><use href="#cl" x="227" y="98"/>
<use href="#wn" x="241" y="440"/><use href="#cl" x="258" y="440"/>
<use href="#wr" x="32" y="657"/><use href="#wn" x="49" y="657"/><use href="#cl" x="66" y="657"/>
<rect x="83.5" y="657.5" width="12" height="13" fill="#f3f3f3" stroke="#aaa"/><path d="M89.5 668 85.5 663.5H88V660H91V663.5H93.5Z" fill="#e84040"/>
<rect x="100.5" y="657.5" width="12" height="13" fill="#f3f3f3" stroke="#aaa"/><path d="M106.5 659.5 102.5 664H105V668H108V664H110.5Z" fill="#12b020"/>
</svg>
</div></body></html>
